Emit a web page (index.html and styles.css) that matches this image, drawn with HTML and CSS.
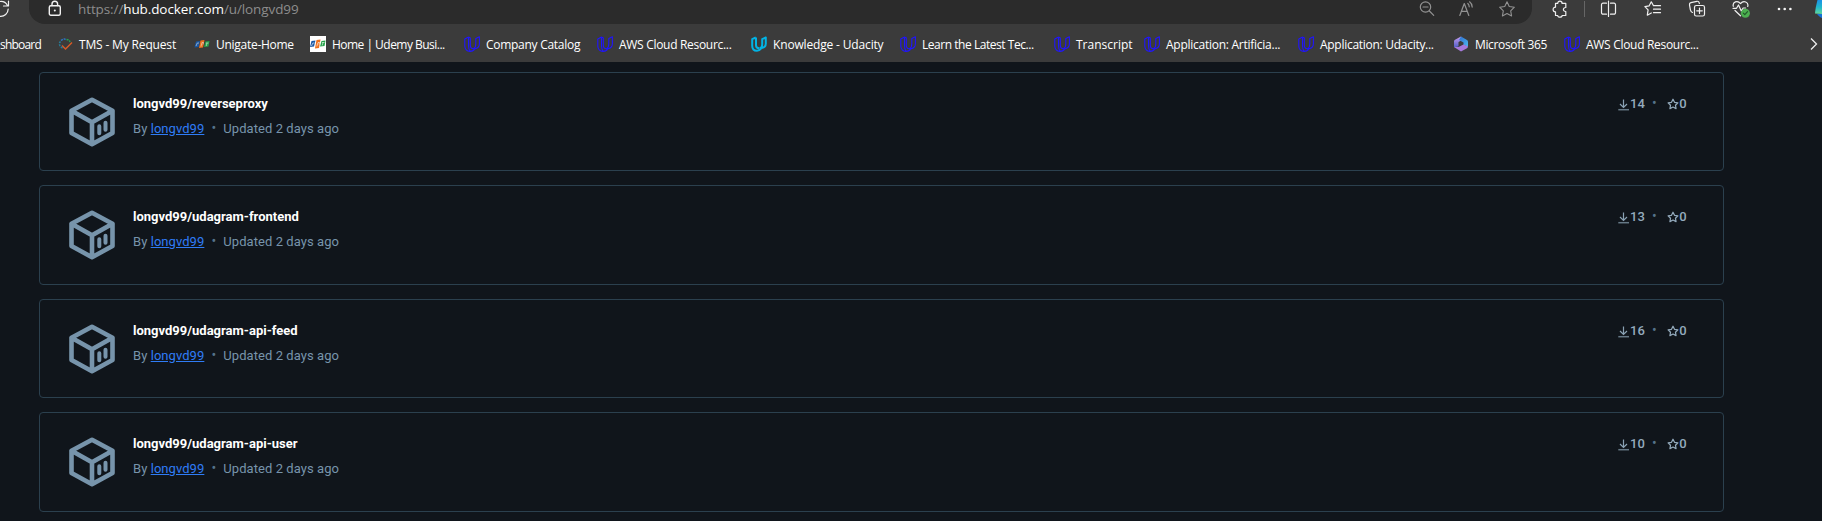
FILE: index.html
```
<!DOCTYPE html>
<html lang="en">
<head>
<meta charset="utf-8">
<title>longvd99's Profile | Docker Hub</title>
<link rel="stylesheet" href="styles.css">
</head>
<body>
<svg class="defs" width="0" height="0">
  <symbol id="udacity" viewBox="0 0 16 16"><path d="M4.500 1 .8 3v7c0 3.400 2 5.400 5.200 5.400 2.500 0 3.500-.8 5-2.400M4.500 1l1.800.9V9c0 2.500 1 3.800 3.200 3.800M4.500 1v8.500c0 2.500.5 4.300 1.700 5.800M9.500 12.800c3.500 0 5.900-1.500 5.900-5V.8l-3.600 1.700V8c0 2.500-.5 3.800-2.300 4.800"/></symbol>
  <symbol id="udacity-solid" viewBox="0 0 16 16"><path d="M4.800 1.500 1.200 3.200v6.500c0 3.200 2 5 4.800 5 2 0 3.200-.9 4.200-2.200M5 1.500v7.800c0 2 1.200 3 3.300 3M10.300 12c2.800-.3 4.500-1.500 4.500-4.500V1.500l-3.600 1.700v5.500c0 2-1 3.300-2.500 3.500"/></symbol>
  <symbol id="cube" viewBox="0 0 46 50"><g fill="none" stroke="currentColor" stroke-linejoin="round" stroke-linecap="round"><path stroke-width="4.600" d="M23 2.800 43.500 13.800v22.200L23 47.200 2.500 36V13.800zM2.500 13.800 23 25.200l20.500-11.400M23 25.200v22"/><path stroke-width="4" d="M30.300 29.200v7M36.500 25.700v7"/></g></symbol>
  <symbol id="download" viewBox="0 0 12 12"><path fill="none" stroke="currentColor" stroke-width="1.200" d="M5.500.5v8M2 5l3.500 3.500L9 5"/><path fill="none" stroke="currentColor" stroke-width="1.500" opacity=".7" d="M.3 10.700h10.700"/></symbol>
  <symbol id="star" viewBox="0 0 20 20"><path fill="none" stroke="currentColor" stroke-width="var(--w)" stroke-linejoin="round" d="m10 2 2.500 5.200 5.700.8-4.100 4 1 5.700-5.100-2.700-5.100 2.700 1-5.700-4.100-4 5.700-.8z"/></symbol>
</svg>
<header class="chrome">
  <div class="toolbar">
    <svg class="reload" viewBox="0 0 12 18"><path d="M7.500 5.500A7.500 7.500 0 0 0 0 1.500M8.500 1v5H3.500M8.200 9A7.500 7.500 0 0 1 0 16.300"/></svg>
    <div class="address">
      <svg class="lock" viewBox="0 0 14 18"><rect x="1.300" y="5.800" width="11" height="9.500" rx="1.500"/><path d="M4 5.500V4a2.800 2.800 0 0 1 5.600 0v1.500"/><circle class="dot" cx="6.800" cy="10.500" r="1"/></svg>
      <span class="url">https://<b>hub.docker.com</b>/u/longvd99</span>
      <div class="address-icons">
        <svg viewBox="0 0 18 18"><circle cx="7.500" cy="7" r="5.200"/><path d="M5 7h5M11.400 11l4.300 4.300"/></svg>
        <svg viewBox="0 0 18 18"><path d="m1.800 15.500 4.500-12 4.500 12M3.400 11.300h5.900M9.800 3.500c1 .9 1.400 2 1.400 3.300M11.600 1.800c1.700 1.300 2.600 3 2.600 5.300"/></svg>
        <svg class="fav" viewBox="0 0 20 20"><use href="#star"/></svg>
      </div>
    </div>
    <svg class="tool puzzle" viewBox="0 0 18 18"><path d="M4.500 3.400h2.200c0-3 4.400-3 4.400 0h3.700v4.100c-3.200-.2-3.200 4.200 0 4v4h-3.700c0 2.300-4.400 2.300-4.400 0H4.500v-3.700c-3.200 0-3.200-4.600 0-4.600z"/></svg>
    <i class="divider"></i>
    <svg class="tool split" viewBox="0 0 18 18"><path d="M6.500 3.200H3a1.500 1.500 0 0 0-1.500 1.500v8A1.500 1.500 0 0 0 3 14.200h3.500M10.500 3.200H14a1.500 1.500 0 0 1 1.500 1.500v8a1.500 1.500 0 0 1-1.500 1.500h-3.500M8.500 1v15.500"/></svg>
    <svg class="tool favs" viewBox="0 0 18 18"><path d="M9.500 5.700 7.300 1.800 5.200 5.800l-4.300.8 3.200 3.200-.8 5.400 4-2.200M9.500 5.700h7M9.500 9.200h7M9.500 12.700h7"/></svg>
    <svg class="tool coll" viewBox="0 0 18 18"><rect x="6.500" y="5.500" width="10" height="10.500" rx="1.800"/><path d="M11.500 8v5.500M8.700 10.800h5.600M4.500 12.500C3 12 2.700 11 2.400 9.800L1.500 4.900c-.2-1.200.3-1.900 1.400-2.200l6-1.400c1.200-.2 2 .2 2.300 1.500l.2.700"/></svg>
    <svg class="tool heart" viewBox="0 0 18 18"><path d="M1.300 6.300C.2 2 5.500-.2 8.500 3.600 11.500-.2 17 2 15.700 6.500M3 10.500l5.500 5.300M1 8.300h3.500L6.500 5l2.800 6 1.800-3h2.500"/><circle cx="13.400" cy="13.200" r="4.500" fill="#4caf50" stroke="none"/><path class="tick" d="m11.300 13.200 1.500 1.500 2.700-3"/></svg>
    <svg class="tool more" viewBox="0 0 18 18"><g class="dot"><circle cx="3" cy="9" r="1.300"/><circle cx="8.700" cy="9" r="1.300"/><circle cx="14.400" cy="9" r="1.300"/></g></svg>
    <svg class="copilot" viewBox="0 0 7 18"><defs><linearGradient id="cp" x2="0" y2="1"><stop stop-color="#1b91e8"/><stop offset=".5" stop-color="#20b6cc"/><stop offset="1" stop-color="#62d99c"/></linearGradient></defs><path fill="url(#cp)" d="M7 0H2.500C1.500 4 .3 9 0 13.500L7 14z"/><path fill="#1573d6" d="M2 14h5v4c-2-.5-3-2-5-4z"/></svg>
  </div>
  <nav class="bookmarks">
    <a class="first"><span>shboard</span></a>
    <a><svg viewBox="0 0 16 16"><g fill="none" stroke-width="1.500"><path stroke="#d65a27" d="M5 9.500 8.500 13 15 6.500"/><path stroke="#277e9b" stroke-dasharray="2 1" d="M5.500 12C2 10 1.500 7 4 5"/><path stroke="#2d77c8" stroke-dasharray="2 1" d="M4 4.500C6 2.800 7.500 2.800 9 3.500"/><path stroke="#249e54" stroke-dasharray="2 1" d="M9.500 3.500c2 0 3 1 3.500 2.500"/></g></svg><span class="t1">TMS - My Request</span></a>
    <a><svg viewBox="0 0 16 16"><path fill="#1857a4" d="m2 5.500 4-.5-1.500 6-4 .5z"/><path fill="#ef701c" d="m6.500 4.500 4-.5-1.500 7.500-4 .5z"/><path fill="#26a34a" d="m11.500 5.500 4-.5-1 5.500-4.500.5z"/><path stroke="#ddd" fill="none" stroke-width=".6" d="M2 10 3.300 7H5M7 10.500l1-4h1.500L9 8.500M12 7h2.500M13 7l-.8 3"/></svg><span class="t2">Unigate-Home</span></a>
    <a><svg viewBox="0 0 16 16"><path fill="#fff" d="M0 0h16v16H0z"/><path fill="#1857a4" d="m1.500 5 4-.5L4 10.500l-4 .5z"/><path fill="#ef701c" d="m6.500 4 4-.5L9 12l-4 .5z"/><path fill="#26a34a" d="m11.500 5 4-.5-1 5.500-4.500.5z"/><path stroke="#fff" fill="none" stroke-width=".6" d="M1.500 10 2.800 7h1.700M6.800 10.500l1.200-4h1.500L9 8.500M12 6.500h2.500M13 6.500l-.8 3"/></svg><span class="t3">Home | Udemy Busi...</span></a>
    <a><svg class="u"><use href="#udacity"/></svg><span class="t4">Company Catalog</span></a>
    <a><svg class="u"><use href="#udacity"/></svg><span class="t5">AWS Cloud Resourc...</span></a>
    <a><svg class="u cyan"><use href="#udacity-solid"/></svg><span class="t6">Knowledge - Udacity</span></a>
    <a><svg class="u"><use href="#udacity"/></svg><span class="t7">Learn the Latest Tec...</span></a>
    <a><svg class="u"><use href="#udacity"/></svg><span class="t8">Transcript</span></a>
    <a><svg class="u"><use href="#udacity"/></svg><span class="t9">Application: Artificia...</span></a>
    <a><svg class="u"><use href="#udacity"/></svg><span class="t10">Application: Udacity...</span></a>
    <a><svg viewBox="0 0 16 16"><defs><linearGradient id="m1" x2="0" y2="1"><stop stop-color="#c79cf0"/><stop offset="1" stop-color="#5360c8"/></linearGradient><linearGradient id="m2" x2="1" y2="1"><stop stop-color="#2f6fd0"/><stop offset="1" stop-color="#4cb8ee"/></linearGradient></defs><path fill="url(#m1)" d="M8 .5 2 3.800C1.200 4.300 1 4.900 1 5.600v5.600l4.500-.8V6L10 3.500z"/><path fill="url(#m2)" d="M8 .5 14 4c.7.400 1 1 1 1.700v5L10.500 9V6.400L6 4z"/><path fill="#a679dc" d="m1 11 7 4.500 6-3.300c.6-.4 1-.9 1-1.700L10.500 8.500 5.500 11z"/></svg><span class="t11">Microsoft 365</span></a>
    <a><svg class="u"><use href="#udacity"/></svg><span class="t12">AWS Cloud Resourc...</span></a>
    <svg class="chevron" viewBox="0 0 8 14"><path d="m1 1.500 5.500 5.500L1 12.500"/></svg>
  </nav>
</header>
<main class="repos">
  <article class="card">
    <svg class="cube"><use href="#cube"/></svg>
    <div class="info"><h2>longvd99/reverseproxy</h2><p>By <a>longvd99</a><i class="sep">•</i>Updated 2 days ago</p></div>
    <div class="stats"><svg class="dl"><use href="#download"/></svg><b>14</b><i>•</i><svg class="st"><use href="#star"/></svg><b>0</b></div>
  </article>
  <article class="card">
    <svg class="cube"><use href="#cube"/></svg>
    <div class="info"><h2>longvd99/udagram-frontend</h2><p>By <a>longvd99</a><i class="sep">•</i>Updated 2 days ago</p></div>
    <div class="stats"><svg class="dl"><use href="#download"/></svg><b>13</b><i>•</i><svg class="st"><use href="#star"/></svg><b>0</b></div>
  </article>
  <article class="card">
    <svg class="cube"><use href="#cube"/></svg>
    <div class="info"><h2>longvd99/udagram-api-feed</h2><p>By <a>longvd99</a><i class="sep">•</i>Updated 2 days ago</p></div>
    <div class="stats"><svg class="dl"><use href="#download"/></svg><b>16</b><i>•</i><svg class="st"><use href="#star"/></svg><b>0</b></div>
  </article>
  <article class="card">
    <svg class="cube"><use href="#cube"/></svg>
    <div class="info"><h2>longvd99/udagram-api-user</h2><p>By <a>longvd99</a><i class="sep">•</i>Updated 2 days ago</p></div>
    <div class="stats"><svg class="dl"><use href="#download"/></svg><b>10</b><i>•</i><svg class="st"><use href="#star"/></svg><b>0</b></div>
  </article>
</main>
</body>
</html>
```
FILE: styles.css
```
* { box-sizing: border-box; }
body { margin: 0; height: 521px; overflow: hidden; background: #10151b; font-family: Roboto, sans-serif; }
svg { display: block; flex: none; }
.defs { position: absolute; }
.chrome { height: 62px; background: #3b3b3b; font-family: "Open Sans", "Noto Sans", sans-serif; overflow: hidden; }
.toolbar { display: flex; height: 24px; }
.toolbar svg { width: 18px; height: 18px; fill: none; stroke: #f0f0f0; stroke-width: 1.2; stroke-linejoin: round; stroke-linecap: round; }
.toolbar svg .dot { fill: #f5f5f5; stroke: none; }
.toolbar .reload { width: 12px; }
.address { display: flex; margin-left: 17px; width: 1503px; height: 24px; padding-left: 19px; background: #2b2b2b; border-radius: 0 0 16px 16px; }
.toolbar .lock { width: 14px; stroke-width: 1.4; }
.url { margin-left: 16px; width: 240px; font-size: 13.5px; line-height: 18px; letter-spacing: -.1px; color: #8d8d8d; white-space: nowrap; }
.url b { font-weight: 400; color: #fff; }
.address-icons { display: flex; gap: 22px; margin-left: auto; padding-right: 16px; }
.toolbar .address-icons svg { stroke: #929292; color: #929292; }
.toolbar .address-icons .fav { --w: 1.2; }
.tool.puzzle { margin-left: 19px; }
.divider { width: 1px; height: 16px; margin: 1px 0 0 15px; background: #666; }
.tool.split { margin-left: 15px; }
.tool.favs { margin-left: 26px; }
.tool.coll { margin-left: 26px; }
.tool.heart { margin-left: 26px; }
.tool.more { margin-left: 26px; }
.toolbar .tick { stroke: #205a28; }
.toolbar .copilot { width: 7px; margin-left: auto; stroke: none; }
.bookmarks { display: grid; grid-template-columns: 57px 137px 116px 154px 133px 154px 149px 154px 90px 154px 155px 111px 246px 8px; height: 38px; align-items: center; font-size: 12px; color: #fff; }
.bookmarks a { display: flex; align-items: center; gap: 6px; height: 24px; margin-top: 2px; white-space: nowrap; }
.bookmarks .first { letter-spacing: -.8px; }
.t1 { letter-spacing: -.16px; }
.t2 { letter-spacing: -.28px; }
.t3 { letter-spacing: -.52px; }
.t4 { letter-spacing: -.28px; }
.t5, .t12 { letter-spacing: -.3px; }
.t7 { letter-spacing: -.46px; }
.t6 { letter-spacing: -.16px; }
.t9 { letter-spacing: -.26px; }
.t10 { letter-spacing: -.28px; }
.t11 { letter-spacing: -.35px; }
.bookmarks a svg { width: 16px; height: 16px; }
.bookmarks .u { fill: none; stroke: #2015ff; stroke-width: 1.1; stroke-linejoin: round; }
.bookmarks .cyan { stroke: #02b3e4; stroke-width: 2; }
.chevron { width: 8px; height: 14px; margin-top: 2px; fill: none; stroke: #eee; stroke-width: 1.3; }
.repos { display: flex; flex-direction: column; gap: 14.2px; padding: 10px 0 0 39px; }
.card { display: flex; flex: none; width: 1685px; height: 99.3px; padding: 23px 36px 0 29px; border: 1px solid #2b404e; border-radius: 4px; }
.cube { width: 46px; height: 50px; margin-top: .6px; color: #7794ab; }
.info { margin-left: 18px; }
h2 { margin: 0; font-size: 13px; line-height: 15px; font-weight: 700; color: #fff; white-space: nowrap; }
p { display: flex; margin: 10px 0 0; font-size: 13px; line-height: 16px; letter-spacing: .06px; color: #7794ab; white-space: pre; }
p a { color: #2f7cf6; text-decoration: underline; }
p i, .stats i { font-style: normal; font-size: 14px; line-height: 15px; text-align: center; color: #55728a; }
.sep { width: 19px; }
.stats { display: flex; margin-left: auto; height: 15px; font-size: 13px; line-height: 15px; color: #94abbd; }
.stats b { font-weight: 500; letter-spacing: .3px; }
.stats .dl { width: 12px; height: 12px; margin-top: 3px; color: #8aa2b4; }
.stats i { width: 18px; margin-right: 4px; }
.stats .st { width: 12px; height: 12px; margin: 2px 0 0; --w: 2; }
```
